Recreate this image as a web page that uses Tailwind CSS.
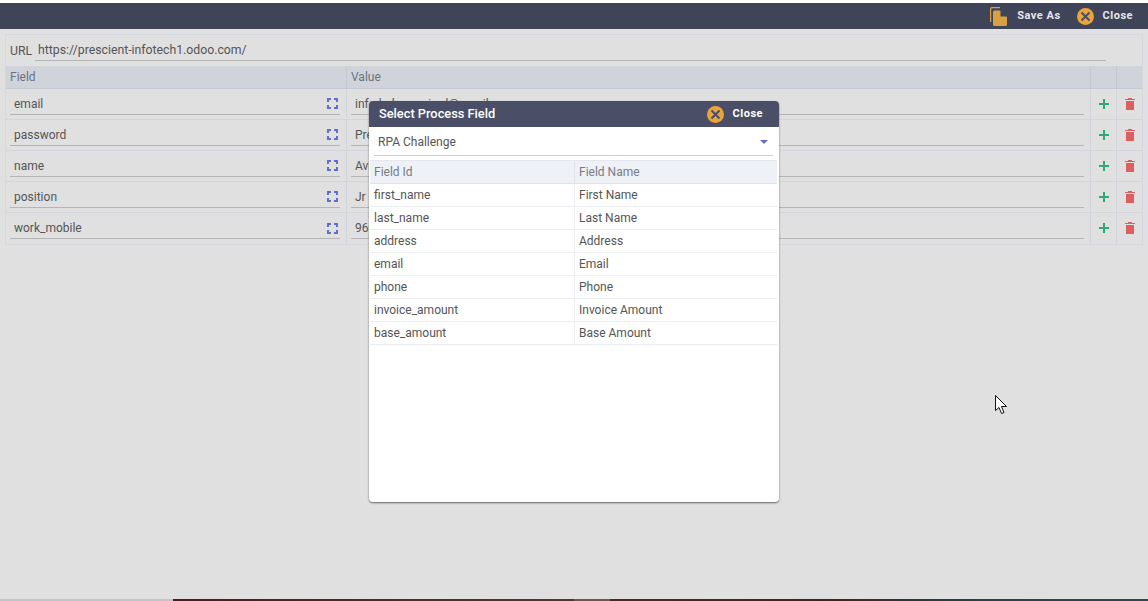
<!DOCTYPE html>
<html lang="en">

<head>
    <meta charset="UTF-8">
    <title>Process Field</title>
    <script src="https://cdn.jsdelivr.net/npm/@tailwindcss/browser@4"></script>
</head>

<body class="h-[601px] w-[1148px] overflow-hidden bg-[#e0e0e0] font-['Roboto',sans-serif] text-[12px] text-[#555555] relative">
    <div class="h-[3px] bg-white"></div>

    <!-- top bar -->
    <header class="h-[26px] bg-[#3f4459] flex items-center justify-end text-[#e4e6ec] text-[11px] tracking-[0.5px] font-bold">
        <svg class="w-[17px] h-[19px] mr-[10px]" viewBox="0 0 17 19">
            <path d="M0.600 15V2Q0.600 0.600 2 0.600H10" fill="none" stroke="#d9a043" stroke-width="1.200" />
            <path d="M3 5Q3 3.500 4.500 3.500H10L17 10V17.500Q17 19 15.500 19H4.500Q3 19 3 17.500Z" fill="#d9a043" />
            <path d="M10.500 3.500V9.500H17Z" fill="#3f4459" />
        </svg>
        <span class="mr-[16px] mt-[1px]">Save As</span>
        <svg class="w-[17px] h-[17px] mr-[9px]" viewBox="0 0 17 17">
            <circle cx="8.500" cy="8.500" r="8.500" fill="#e9a43c" />
            <path d="M4.500 4.500L12.500 12.500M12.500 4.500L4.500 12.500" stroke="#4a4f67" stroke-width="2" />
        </svg>
        <span class="mr-[15px] mt-[1px]">Close</span>
    </header>

    <!-- main panel -->
    <main class="mx-[5px] mt-[5px] w-[1138px] border border-[#d5d8e0]">
        <div class="h-[31px] flex pl-[4px] pr-[36px]">
            <span class="h-[26px] pt-[6px] mr-[3px] flex items-center text-[12.250px]">URL</span>
            <div class="flex-1 h-[26px] pt-[6px] pl-[3px] flex items-center border-b border-[#b5b5b5] text-[12.250px]">https://prescient-infotech1.odoo.com/</div>
        </div>

        <div class="grid grid-cols-[341px_744px_26px_1fr]">
            <div class="h-[23px] bg-[#d0d4da] border-b border-r border-[#c5c9d3] pl-[4px] flex items-center text-[#6b7280]">Field</div>
            <div class="h-[23px] bg-[#d0d4da] border-b border-r border-[#c5c9d3] pl-[4px] flex items-center text-[#6b7280]">Value</div>
            <div class="h-[23px] bg-[#d0d4da] border-b border-r border-[#c5c9d3]"></div>
            <div class="h-[23px] bg-[#d0d4da] border-b border-[#c5c9d3]"></div>

            <!-- row: email -->
            <div class="h-[31px] border-b border-r border-[#d2d5dc] pl-[4px] pr-[6px] pb-[4px] flex">
                <div class="flex-1 flex items-center justify-between pl-[4px] pr-[2px] pt-[4px] border-b border-[#b5b5b5]">
                    <span>email</span>
                    <svg class="w-[11px] h-[11px]" viewBox="0 0 11 11" fill="none" stroke="#5f6fcb" stroke-width="2"><path d="M1 4V1H4M7 1H10V4M10 7V10H7M4 10H1V7" /></svg>
                </div>
            </div>
            <div class="h-[31px] border-b border-r border-[#d2d5dc] pl-[4px] pr-[6px] pb-[4px] flex">
                <div class="flex-1 flex items-center pl-[4px] pt-[4px] border-b border-[#b5b5b5]">info.help.required@gmail.com</div>
            </div>
            <div class="h-[31px] border-b border-r border-[#d2d5dc] flex items-center justify-center">
                <svg class="w-[10px] h-[10px]" viewBox="0 0 10 10"><path d="M5 0V10M0 5H10" stroke="#2fa87a" stroke-width="2" /></svg>
            </div>
            <div class="h-[31px] border-b border-[#d2d5dc] flex items-center justify-center">
                <svg class="w-[10px] h-[12px]" viewBox="0 0 10 12" fill="#dd5f5f"><path d="M3 0H7V1H10V2H0V1H3ZM1 3H9V12H1Z" /></svg>
            </div>

            <!-- row: password -->
            <div class="h-[31px] border-b border-r border-[#d2d5dc] pl-[4px] pr-[6px] pb-[4px] flex">
                <div class="flex-1 flex items-center justify-between pl-[4px] pr-[2px] pt-[4px] border-b border-[#b5b5b5]">
                    <span>password</span>
                    <svg class="w-[11px] h-[11px]" viewBox="0 0 11 11" fill="none" stroke="#5f6fcb" stroke-width="2"><path d="M1 4V1H4M7 1H10V4M10 7V10H7M4 10H1V7" /></svg>
                </div>
            </div>
            <div class="h-[31px] border-b border-r border-[#d2d5dc] pl-[4px] pr-[6px] pb-[4px] flex">
                <div class="flex-1 flex items-center pl-[4px] pt-[4px] border-b border-[#b5b5b5]">Prescient</div>
            </div>
            <div class="h-[31px] border-b border-r border-[#d2d5dc] flex items-center justify-center">
                <svg class="w-[10px] h-[10px]" viewBox="0 0 10 10"><path d="M5 0V10M0 5H10" stroke="#2fa87a" stroke-width="2" /></svg>
            </div>
            <div class="h-[31px] border-b border-[#d2d5dc] flex items-center justify-center">
                <svg class="w-[10px] h-[12px]" viewBox="0 0 10 12" fill="#dd5f5f"><path d="M3 0H7V1H10V2H0V1H3ZM1 3H9V12H1Z" /></svg>
            </div>

            <!-- row: name -->
            <div class="h-[31px] border-b border-r border-[#d2d5dc] pl-[4px] pr-[6px] pb-[4px] flex">
                <div class="flex-1 flex items-center justify-between pl-[4px] pr-[2px] pt-[4px] border-b border-[#b5b5b5]">
                    <span>name</span>
                    <svg class="w-[11px] h-[11px]" viewBox="0 0 11 11" fill="none" stroke="#5f6fcb" stroke-width="2"><path d="M1 4V1H4M7 1H10V4M10 7V10H7M4 10H1V7" /></svg>
                </div>
            </div>
            <div class="h-[31px] border-b border-r border-[#d2d5dc] pl-[4px] pr-[6px] pb-[4px] flex">
                <div class="flex-1 flex items-center pl-[4px] pt-[4px] border-b border-[#b5b5b5]">Avinash</div>
            </div>
            <div class="h-[31px] border-b border-r border-[#d2d5dc] flex items-center justify-center">
                <svg class="w-[10px] h-[10px]" viewBox="0 0 10 10"><path d="M5 0V10M0 5H10" stroke="#2fa87a" stroke-width="2" /></svg>
            </div>
            <div class="h-[31px] border-b border-[#d2d5dc] flex items-center justify-center">
                <svg class="w-[10px] h-[12px]" viewBox="0 0 10 12" fill="#dd5f5f"><path d="M3 0H7V1H10V2H0V1H3ZM1 3H9V12H1Z" /></svg>
            </div>

            <!-- row: position -->
            <div class="h-[31px] border-b border-r border-[#d2d5dc] pl-[4px] pr-[6px] pb-[4px] flex">
                <div class="flex-1 flex items-center justify-between pl-[4px] pr-[2px] pt-[4px] border-b border-[#b5b5b5]">
                    <span>position</span>
                    <svg class="w-[11px] h-[11px]" viewBox="0 0 11 11" fill="none" stroke="#5f6fcb" stroke-width="2"><path d="M1 4V1H4M7 1H10V4M10 7V10H7M4 10H1V7" /></svg>
                </div>
            </div>
            <div class="h-[31px] border-b border-r border-[#d2d5dc] pl-[4px] pr-[6px] pb-[4px] flex">
                <div class="flex-1 flex items-center pl-[4px] pt-[4px] border-b border-[#b5b5b5]">Jr Developer</div>
            </div>
            <div class="h-[31px] border-b border-r border-[#d2d5dc] flex items-center justify-center">
                <svg class="w-[10px] h-[10px]" viewBox="0 0 10 10"><path d="M5 0V10M0 5H10" stroke="#2fa87a" stroke-width="2" /></svg>
            </div>
            <div class="h-[31px] border-b border-[#d2d5dc] flex items-center justify-center">
                <svg class="w-[10px] h-[12px]" viewBox="0 0 10 12" fill="#dd5f5f"><path d="M3 0H7V1H10V2H0V1H3ZM1 3H9V12H1Z" /></svg>
            </div>

            <!-- row: work_mobile -->
            <div class="h-[31px] border-r border-[#d2d5dc] pl-[4px] pr-[6px] pb-[5px] flex">
                <div class="flex-1 flex items-center justify-between pl-[4px] pr-[2px] pt-[5px] border-b border-[#b5b5b5]">
                    <span>work_mobile</span>
                    <svg class="w-[11px] h-[11px]" viewBox="0 0 11 11" fill="none" stroke="#5f6fcb" stroke-width="2"><path d="M1 4V1H4M7 1H10V4M10 7V10H7M4 10H1V7" /></svg>
                </div>
            </div>
            <div class="h-[31px] border-r border-[#d2d5dc] pl-[4px] pr-[6px] pb-[5px] flex">
                <div class="flex-1 flex items-center pl-[4px] pt-[5px] border-b border-[#b5b5b5]">9600000000</div>
            </div>
            <div class="h-[31px] pb-[1px] border-r border-[#d2d5dc] flex items-center justify-center">
                <svg class="w-[10px] h-[10px]" viewBox="0 0 10 10"><path d="M5 0V10M0 5H10" stroke="#2fa87a" stroke-width="2" /></svg>
            </div>
            <div class="h-[31px] pb-[1px] flex items-center justify-center">
                <svg class="w-[10px] h-[12px]" viewBox="0 0 10 12" fill="#dd5f5f"><path d="M3 0H7V1H10V2H0V1H3ZM1 3H9V12H1Z" /></svg>
            </div>
        </div>
    </main>

    <!-- dialog -->
    <section class="absolute left-[369px] top-[101px] w-[410px] h-[401px] bg-white rounded-[4px] shadow-[0_1px_2px_rgba(0,0,0,0.55)] overflow-hidden">
        <div class="h-[26px] bg-[#4a4f67] flex items-center text-white">
            <span class="ml-[10px] text-[12.800px] font-medium flex-1">Select Process Field</span>
            <svg class="w-[17px] h-[17px] mr-[9px]" viewBox="0 0 17 17">
                <circle cx="8.500" cy="8.500" r="8.500" fill="#e9a43c" />
                <path d="M4.500 4.500L12.500 12.500M12.500 4.500L4.500 12.500" stroke="#4a4f67" stroke-width="2" />
            </svg>
            <span class="mr-[16px] text-[11px] tracking-[0.5px] font-bold">Close</span>
        </div>
        <div class="ml-[5px] mr-[6px] h-[29px] pt-[2px] border-b border-[#cfcfcf] flex items-center justify-between pl-[4px] pr-[5px]">
            <span class="text-[12px]">RPA Challenge</span>
            <div class="w-0 h-0 border-x-[4px] border-x-transparent border-t-[4px] border-t-[#5f6fcb]"></div>
        </div>
        <div class="mt-[4px] ml-[1px] mr-[2px] grid grid-cols-[205px_1fr] border-t border-[#e4e7ee]">
            <div class="h-[23px] bg-[#eef1f6] border-b border-r border-[#dfe3ec] pl-[4px] flex items-center text-[#777c88]">Field Id</div>
            <div class="h-[23px] bg-[#eef1f6] border-b border-[#dfe3ec] pl-[4px] flex items-center text-[#777c88]">Field Name</div>
            <div class="h-[23px] border-b border-r border-[#ecedf1] pl-[4px] flex items-center">first_name</div>
            <div class="h-[23px] border-b border-[#ecedf1] pl-[4px] flex items-center">First Name</div>
            <div class="h-[23px] border-b border-r border-[#ecedf1] pl-[4px] flex items-center">last_name</div>
            <div class="h-[23px] border-b border-[#ecedf1] pl-[4px] flex items-center">Last Name</div>
            <div class="h-[23px] border-b border-r border-[#ecedf1] pl-[4px] flex items-center">address</div>
            <div class="h-[23px] border-b border-[#ecedf1] pl-[4px] flex items-center">Address</div>
            <div class="h-[23px] border-b border-r border-[#ecedf1] pl-[4px] flex items-center">email</div>
            <div class="h-[23px] border-b border-[#ecedf1] pl-[4px] flex items-center">Email</div>
            <div class="h-[23px] border-b border-r border-[#ecedf1] pl-[4px] flex items-center">phone</div>
            <div class="h-[23px] border-b border-[#ecedf1] pl-[4px] flex items-center">Phone</div>
            <div class="h-[23px] border-b border-r border-[#ecedf1] pl-[4px] flex items-center">invoice_amount</div>
            <div class="h-[23px] border-b border-[#ecedf1] pl-[4px] flex items-center">Invoice Amount</div>
            <div class="h-[23px] border-b border-r border-[#ecedf1] pl-[4px] flex items-center">base_amount</div>
            <div class="h-[23px] border-b border-[#ecedf1] pl-[4px] flex items-center">Base Amount</div>
        </div>
    </section>

    <!-- mouse pointer -->
    <svg class="absolute left-[995px] top-[395px] w-[13px] h-[20px]" viewBox="0 0 13 20">
        <path d="M0.500 0.500V15.500L4 12.500L6.500 18.500L9 17.500L6.500 11.500H11.500Z" fill="#fff" stroke="#111" stroke-width="1" />
    </svg>

    <!-- strip of the desktop below the window -->
    <div class="absolute left-0 bottom-0 w-full h-[2px] flex">
        <div class="w-[173px] bg-[#c4c4c4]"></div>
        <div class="w-[401px] bg-[linear-gradient(90deg,#4a1c28,#4b3a33)]"></div>
        <div class="w-[36px] bg-[#6b5855]"></div>
        <div class="flex-1 bg-[linear-gradient(90deg,#4a2a26,#3f2622_40%,#24444a_70%,#2a4a50)]"></div>
    </div>
</body>

</html>
